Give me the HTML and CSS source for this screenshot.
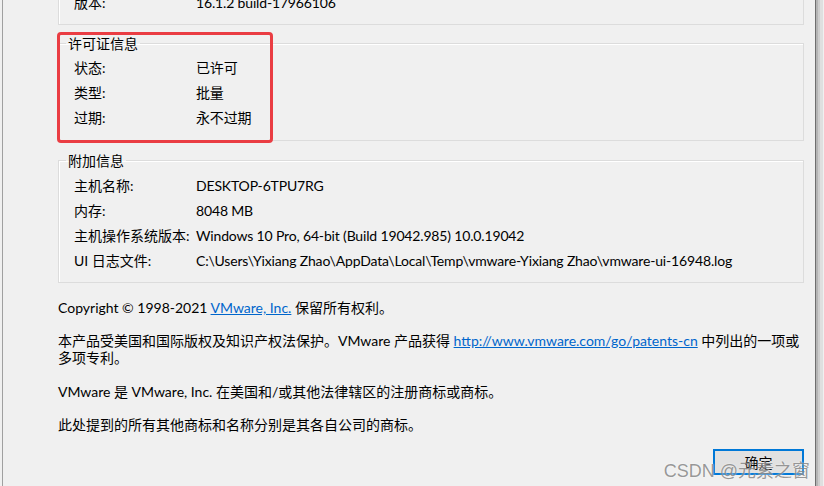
FILE: index.html
```html
<!DOCTYPE html>
<html lang="zh-CN">
<head>
    <meta charset="UTF-8">
    <title>关于 VMware Workstation</title>
    <link rel="stylesheet" href="styles.css">
</head>
<body>
    <div class="window">
        <fieldset class="group group-product">
            <legend>产品信息</legend>
            <div class="info-row"><span>产品:</span><span>VMware® Workstation 16 Pro</span></div>
            <div class="info-row"><span>版本:</span><span>16.1.2 build-17966106</span></div>
        </fieldset>

        <fieldset class="group group-license">
            <legend>许可证信息</legend>
            <div class="info-row"><span>状态:</span><span>已许可</span></div>
            <div class="info-row"><span>类型:</span><span>批量</span></div>
            <div class="info-row"><span>过期:</span><span>永不过期</span></div>
            <div class="mark"></div>
        </fieldset>

        <fieldset class="group group-extra">
            <legend>附加信息</legend>
            <div class="info-row"><span>主机名称:</span><span>DESKTOP-6TPU7RG</span></div>
            <div class="info-row"><span>内存:</span><span>8048 MB</span></div>
            <div class="info-row"><span>主机操作系统版本:</span><span>Windows 10 Pro, 64-bit (Build 19042.985) 10.0.19042</span></div>
            <div class="info-row"><span>UI 日志文件:</span><span>C:\Users\Yixiang Zhao\AppData\Local\Temp\vmware-Yixiang Zhao\vmware-ui-16948.log</span></div>
        </fieldset>

        <p class="note">Copyright © 1998-2021 <a href="#">VMware, Inc.</a> 保留所有权利。</p>
        <p class="note">本产品受美国和国际版权及知识产权法保护。VMware 产品获得 <a href="#">http://www.vmware.com/go/patents-cn</a> 中列出的一项或多项专利。</p>
        <p class="note note-wide">VMware 是 VMware, Inc. 在美国和/或其他法律辖区的注册商标或商标。</p>
        <p class="note">此处提到的所有其他商标和名称分别是其各自公司的商标。</p>

        <div class="actions">
            <button class="btn-ok">确定</button>
            <span class="watermark">CSDN @元素之窗</span>
        </div>
    </div>
</body>
</html>
```

FILE: styles.css
```css
html, body {
    margin: 0;
    padding: 0;
    height: 100%;
    overflow: hidden;
}

body {
    background: #f0f0f0;
    color: #000;
    font-family: "Lato", "Noto Sans CJK SC", sans-serif;
    font-size: 14px;
}

.window {
    display: flow-root;
    margin-left: 2px;
    width: 814px;
    height: 100%;
    box-sizing: border-box;
    padding: 0 11px 0 55px;
    border-left: 1px solid #a0a0a0;
    border-right: 1px solid #6e6e6e;
    box-shadow: 2px 0 0 #b4b4b4, 4px 0 0 #cdcdcd, 7px 0 0 #dfdfdf;
}

.group {
    position: relative;
    margin: 0;
    padding: 4px 0 9px 15px;
    border: 1px solid #dcdcdc;
    box-shadow: inset 1px 1px 0 #fff;
    min-width: 0;
}

.group legend {
    margin-left: -8px;
    padding: 0 2px;
    line-height: 17px;
}

.group-product {
    margin-top: -56px;
}

.group-license {
    margin-top: 10px;
    padding-top: 3px;
    padding-bottom: 10px;
}

.group-extra {
    margin-top: 11px;
}

.info-row {
    display: grid;
    grid-template-columns: 122px auto;
    height: 25px;
    line-height: 25px;
    white-space: nowrap;
}

.info-row span:last-child {
    letter-spacing: -0.16px;
}

.mark {
    position: absolute;
    left: -2px;
    top: -20px;
    width: 210px;
    height: 105px;
    border: 3px solid #ea3d43;
    border-radius: 4px;
}

.note {
    margin: 16px 0 0;
    line-height: 17px;
}

.note-wide {
    margin-top: 17px;
}

.note a {
    color: #0066cc;
}

.actions {
    position: relative;
    display: flex;
    justify-content: flex-end;
    margin-top: 16px;
}

.btn-ok {
    width: 91px;
    height: 26px;
    padding: 0;
    background: #e1e1e1;
    border: 2px solid #0078d7;
    font-family: inherit;
    font-size: 14px;
    color: #000;
}

.watermark {
    position: absolute;
    right: -6px;
    top: 7px;
    font-family: "Liberation Sans", "Noto Sans CJK SC", sans-serif;
    font-size: 18px;
    color: rgba(120, 120, 120, 0.75);
    text-shadow: 0 0 2px rgba(255, 255, 255, 0.8);
    white-space: nowrap;
}
```
